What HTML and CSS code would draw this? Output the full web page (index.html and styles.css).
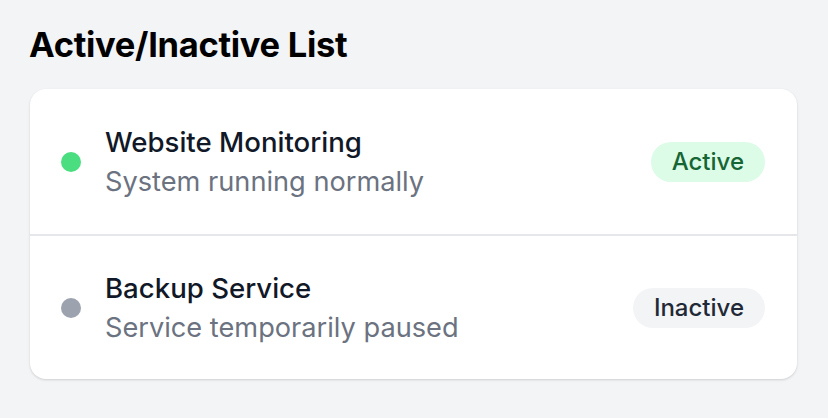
FILE: index.html
```html
<!DOCTYPE html>
<html lang="en">
<head>
    <meta charset="UTF-8">
    <meta name="viewport" content="width=device-width, initial-scale=1.0">
    <title>Active/Inactive List</title>
    <link rel="stylesheet" href="styles.css">
</head>
<body>
    <div class="page">
        <h1 class="title">Active/Inactive List</h1>

        <ul class="status-list">
            <li class="status-item">
                <span class="dot dot-active"></span>
                <div class="info">
                    <div class="name">Website Monitoring</div>
                    <div class="desc">System running normally</div>
                </div>
                <span class="badge badge-active">Active</span>
            </li>
            <li class="status-item">
                <span class="dot dot-inactive"></span>
                <div class="info">
                    <div class="name">Backup Service</div>
                    <div class="desc">Service temporarily paused</div>
                </div>
                <span class="badge badge-inactive">Inactive</span>
            </li>
        </ul>
    </div>
</body>
</html>
```

FILE: styles.css
```css
* {
    margin: 0;
    padding: 0;
    box-sizing: border-box;
}

body {
    font-family: 'Inter', 'Noto Sans', sans-serif;
    background: #f3f4f6;
    min-height: 100vh;
}

.page {
    padding: 17px 31px 0 30px;
}

.title {
    font-size: 34.5px;
    line-height: 56px;
    font-weight: 700;
    color: #000;
    letter-spacing: -0.3px;
    margin-left: -1px;
    margin-bottom: 16px;
}

.status-list {
    list-style: none;
    background: white;
    border-radius: 16px;
    box-shadow: 0 1px 3px rgba(0, 0, 0, 0.1), 0 1px 2px rgba(0, 0, 0, 0.06);
}

.status-item {
    display: flex;
    align-items: center;
    gap: 24px;
    padding: 32px;
    height: 145px;
}

.status-item + .status-item {
    border-top: 2px solid #e5e7eb;
}

.dot {
    width: 20px;
    height: 20px;
    border-radius: 50%;
    flex-shrink: 0;
    margin-left: -1px;
}

.dot-active {
    background: #4ade80;
}

.dot-inactive {
    background: #9ca3af;
}

.info {
    flex: 1;
}

.name {
    font-size: 27.6px;
    line-height: 40px;
    font-weight: 500;
    color: #111827;
}

.desc {
    font-size: 27.2px;
    line-height: 40px;
    color: #6b7280;
}

.badge {
    font-size: 24px;
    line-height: 32px;
    font-weight: 500;
    padding: 4px 21px;
    border-radius: 999px;
    margin-left: 2px;
}

.badge-active {
    background: #dcfce7;
    color: #166534;
}

.badge-inactive {
    background: #f3f4f6;
    color: #1f2937;
}
```
